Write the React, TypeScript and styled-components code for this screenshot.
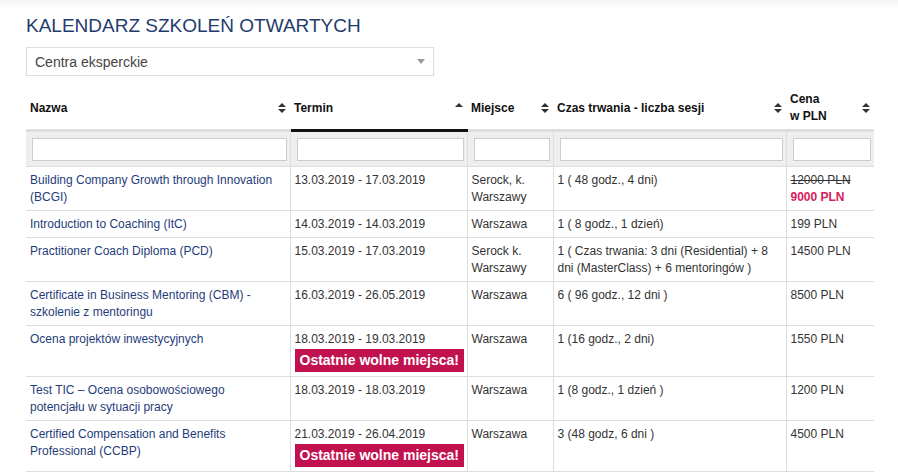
import React from "react";
import styled, { createGlobalStyle } from "styled-components";

const Global = createGlobalStyle`
  body { margin: 0; font-family: "Liberation Sans", Arial, sans-serif; background: #fff; }
`;
const Page = styled.div`
  padding: 14px 24px 0 26px;
  background: linear-gradient(#f3f3f3 0, #fff 10px);
  height: 475px; box-sizing: border-box; overflow: hidden;
`;
const Title = styled.h1`
  margin: 0 0 9px 0; font-weight: normal; font-size: 19px; color: #1f3c6e; line-height: 24px;
`;
const Select = styled.div`
  width: 408px; height: 29px; border: 1px solid #ddd; box-sizing: border-box;
  display: flex; align-items: center; justify-content: space-between;
  padding: 0 8px; font-size: 14px; color: #444; margin-bottom: 11px;
`;
const Caret = styled.span`
  width: 0; height: 0; border-left: 4px solid transparent; border-right: 4px solid transparent;
  border-top: 5px solid #999;
`;
const Table = styled.table`
  width: 848px; border-collapse: collapse; font-size: 12px; color: #333; table-layout: fixed;
`;
const Th = styled.th<{ $active?: boolean }>`
  text-align: left; font-weight: bold; color: #111; font-size: 12px; height: 42px;
  padding: 0 4px; border-bottom: 3px solid ${p => (p.$active ? "#111" : "#ddd")}; vertical-align: middle;
  line-height: 17px;
`;
const ThInner = styled.div`
  display: flex; justify-content: space-between; align-items: center;
`;
const FilterTd = styled.td`
  background: #eee; padding: 5px 3px 5px 6px; height: 24px; border-left: 1px solid #ddd;
  &:first-child { border-left: none; }
`;
const Input = styled.div`
  height: 23px; border: 1px solid #ccc; background: #fff; box-sizing: border-box;
`;
const Td = styled.td<{ $wide?: boolean }>`
  padding: 5px ${p => (p.$wide ? "14px" : "4px")} 4px 4px; vertical-align: top; line-height: 17px;
  border-top: 1px solid #ddd; border-left: 1px solid #ddd;
  &:first-child { border-left: none; }
`;
const Row = styled.tr`
  &:last-child td { border-bottom: 1px solid #ddd; }
`;
const Link = styled.a`
  color: #1f3c7a; text-decoration: none;
`;
const Badge = styled.div`
  width: fit-content; white-space: nowrap; background: #c2114f; color: #fff; font-weight: bold; font-size: 14px;
  padding: 3px 5px; margin-top: 1px; line-height: 17px;
`;
const Old = styled.div` text-decoration: line-through; `;
const Promo = styled.div` color: #d61c5c; font-weight: bold; `;

const Sort = ({ dir }: { dir?: "up" }) => (
  <svg width="8" height="10" viewBox="0 0 8 10">
    <path d="M0 4 L4 0 L8 4Z" fill="#333" />
    {dir !== "up" && <path d="M0 6 L4 10 L8 6Z" fill="#333" />}
  </svg>
);

const rows: { name: React.ReactNode; date: string; badge?: boolean; place: React.ReactNode; dur: React.ReactNode; price: React.ReactNode }[] = [
  { name: "Building Company Growth through Innovation (BCGI)", date: "13.03.2019 - 17.03.2019", place: "Serock, k. Warszawy", dur: "1 ( 48 godz., 4 dni)", price: <><Old>12000 PLN</Old><Promo>9000 PLN</Promo></> },
  { name: "Introduction to Coaching (ItC)", date: "14.03.2019 - 14.03.2019", place: "Warszawa", dur: "1 ( 8 godz., 1 dzień)", price: "199 PLN" },
  { name: "Practitioner Coach Diploma (PCD)", date: "15.03.2019 - 17.03.2019", place: "Serock k. Warszawy", dur: "1 ( Czas trwania: 3 dni (Residential) + 8 dni (MasterClass) + 6 mentoringów )", price: "14500 PLN" },
  { name: "Certificate in Business Mentoring (CBM) - szkolenie z mentoringu", date: "16.03.2019 - 26.05.2019", place: "Warszawa", dur: "6 ( 96 godz., 12 dni )", price: "8500 PLN" },
  { name: "Ocena projektów inwestycyjnych", date: "18.03.2019 - 19.03.2019", badge: true, place: "Warszawa", dur: "1 (16 godz., 2 dni)", price: "1550 PLN" },
  { name: "Test TIC – Ocena osobowościowego potencjału w sytuacji pracy", date: "18.03.2019 - 18.03.2019", place: "Warszawa", dur: "1 (8 godz., 1 dzień )", price: "1200 PLN" },
  { name: "Certified Compensation and Benefits Professional (CCBP)", date: "21.03.2019 - 26.04.2019", badge: true, place: "Warszawa", dur: "3 (48 godz, 6 dni )", price: "4500 PLN" },
];

export default function App() {
  return (
    <Page>
      <Global />
      <Title>KALENDARZ SZKOLEŃ OTWARTYCH</Title>
      <Select>Centra eksperckie<Caret /></Select>
      <Table>
        <colgroup>
          <col style={{ width: 264 }} /><col style={{ width: 177 }} /><col style={{ width: 86 }} /><col style={{ width: 233 }} /><col style={{ width: 88 }} />
        </colgroup>
        <thead>
          <tr>
            <Th><ThInner>Nazwa<Sort /></ThInner></Th>
            <Th $active><ThInner>Termin<Sort dir="up" /></ThInner></Th>
            <Th><ThInner>Miejsce<Sort /></ThInner></Th>
            <Th><ThInner>Czas trwania - liczba sesji<Sort /></ThInner></Th>
            <Th><ThInner><span>Cena<br />w PLN</span><Sort /></ThInner></Th>
          </tr>
          <tr>
            {[0, 1, 2, 3, 4].map(i => <FilterTd key={i}><Input /></FilterTd>)}
          </tr>
        </thead>
        <tbody>
          {rows.map((r, i) => (
            <Row key={i}>
              <Td $wide><Link>{r.name}</Link></Td>
              <Td>{r.date}{r.badge && <Badge>Ostatnie wolne miejsca!</Badge>}</Td>
              <Td>{r.place}</Td>
              <Td>{r.dur}</Td>
              <Td>{r.price}</Td>
            </Row>
          ))}
        </tbody>
      </Table>
    </Page>
  );
}
